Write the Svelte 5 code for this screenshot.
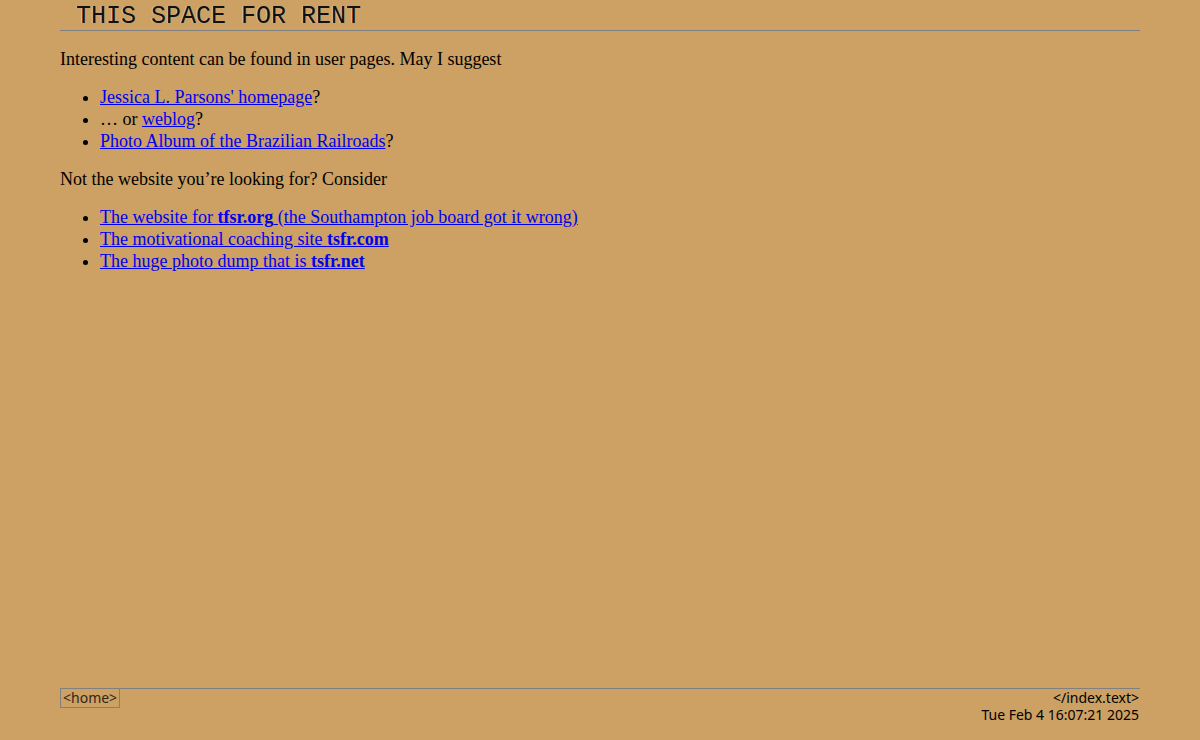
<script>
  const suggestions = [
    { before: '', link: "Jessica L. Parsons' homepage" },
    { before: '… or ', link: 'weblog' },
    { before: '', link: 'Photo Album of the Brazilian Railroads' }
  ];
  const others = [
    { start: 'The website for ', site: 'tfsr.org', end: ' (the Southampton job board got it wrong)' },
    { start: 'The motivational coaching site ', site: 'tsfr.com', end: '' },
    { start: 'The huge photo dump that is ', site: 'tsfr.net', end: '' }
  ];
</script>

<div class="page" id="top">
  <header><h1>THIS SPACE FOR RENT</h1></header>
  <main>
    <p>Interesting content can be found in user pages. May I suggest</p>
    <ul>
      {#each suggestions as s}
        <li>{s.before}<a href="#top">{s.link}</a>?</li>
      {/each}
    </ul>
    <p>Not the website you’re looking for? Consider</p>
    <ul>
      {#each others as o}
        <li><a href="#top">{o.start}<b>{o.site}</b>{o.end}</a></li>
      {/each}
    </ul>
  </main>
  <footer>
    <a class="home" href="#top">&lt;home&gt;</a>
    <div class="info">
      <div>&lt;/index.text&gt;</div>
      <div>Tue Feb 4 16:07:21 2025</div>
    </div>
  </footer>
</div>

<style>
  :global(body) {
    margin: 0;
    background: #cda063;
  }
  .page {
    box-sizing: border-box;
    min-height: 100vh;
    padding: 0 5% 17px;
    display: flex;
    flex-direction: column;
    color: #000;
    font: 18px/22px "Palatino Linotype", Palatino, "Liberation Serif", serif;
  }
  header {
    padding: 4px 16px 0;
    border-bottom: 1px solid #808080;
  }
  h1 {
    margin: 0;
    font: 400 25px/26px "Liberation Mono", monospace;
    color: #111;
    text-shadow: -1px 0 0 #d9c3a0;
  }
  main {
    flex: 1;
    padding-top: 1px;
  }
  p {
    margin: 16px 0;
  }
  ul {
    margin: 16px 0;
    padding-left: 40px;
  }
  a {
    color: #0000ee;
  }
  footer {
    display: flex;
    justify-content: space-between;
    align-items: flex-start;
    border-top: 1px solid #808080;
    font: 14px/17px "Noto Sans", "Open Sans", sans-serif;
  }
  .home {
    padding: 0 2px 1px;
    border: 1px solid #808080;
    border-top: 0;
    color: #33261a;
    text-decoration: none;
  }
  .info {
    padding: 0 1px 0 0;
    text-align: right;
  }
</style>
